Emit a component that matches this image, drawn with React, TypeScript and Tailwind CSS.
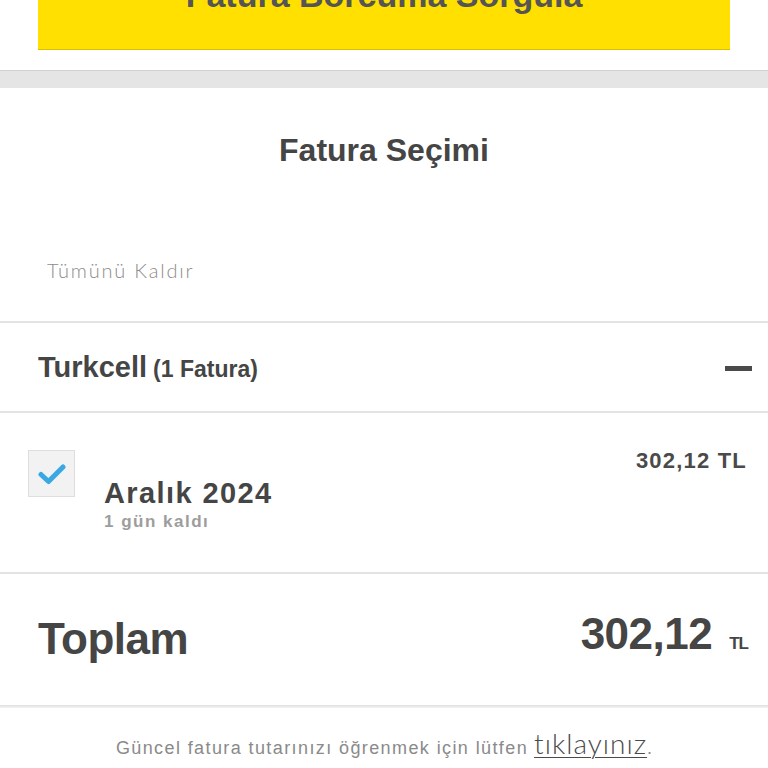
const sans = { fontFamily: '"Liberation Sans", Arial, sans-serif' }

const Divider = ({ h = 'h-[2px]' }: { h?: string }) => (
    <div className={`${h} w-full bg-[#e3e3e3]`} />
)

export default function App() {
    return (
        <div className="-mt-[30px] bg-white text-[#454545]" style={sans}>
            <div className="px-[38px]">
                <div className="h-[80px] bg-[#ffe000] border-b border-[#d9c200] pt-[8px] text-center text-[34px] leading-[34px] font-bold text-[#555]">
                    Fatura Borcuma Sorgula
                </div>
            </div>
            <div className="h-[20px]" />
            <div className="h-[18px] border-t border-[#d0d0d0] bg-[#e5e5e5]" />

            <div className="h-[233px] pt-[42px]">
                <h1 className="text-center text-[32px] leading-[40px] font-bold">Fatura Seçimi</h1>
                <p
                    className="mt-[86px] pl-[47px] text-[20px] leading-[28px] font-light text-[#8c8c8c] tracking-[1.8px]"
                    style={{ fontFamily: 'Lato, "Open Sans", sans-serif' }}
                >
                    Tümünü Kaldır
                </p>
            </div>
            <Divider />

            <div className="h-[88px] flex items-center justify-between pl-[38px] pr-[16px]">
                <div className="flex items-baseline font-bold">
                    <span className="text-[29px] leading-[34px]">Turkcell</span>
                    <span className="ml-[6px] text-[23px] leading-[28px]">(1 Fatura)</span>
                </div>
                <div className="w-[27px] h-[5px] bg-[#4a4a4a] mt-[2px]" />
            </div>
            <Divider />

            <div className="h-[159px] flex">
                <div className="ml-[28px] mt-[37px] w-[47px] h-[47px] bg-[#f2f2f2] border border-[#dedede] flex items-center justify-center">
                    <svg width="28" height="22" viewBox="0 0 28 22">
                        <path d="M3 11.5 L10.5 18.5 L25 4" fill="none" stroke="#3aa9e3" strokeWidth="5" strokeLinecap="round" strokeLinejoin="round" />
                    </svg>
                </div>
                <div className="flex-1 ml-[29px] pt-[35px] pr-[21px] font-bold">
                    <div className="h-[26px] flex justify-end text-[22px] leading-[26px] tracking-[1.2px] text-[#4a4a4a]">
                        302,12 TL
                    </div>
                    <div className="mt-[2px] text-[29px] leading-[34px] tracking-[1.4px]">Aralık 2024</div>
                    <div className="mt-[1px] text-[17px] leading-[22px] tracking-[1.5px] text-[#9d9d9d]">1 gün kaldı</div>
                </div>
            </div>
            <Divider />

            <div className="h-[131px] flex justify-between pl-[38px] pr-[20px] font-bold">
                <div className="mt-[40px] text-[44px] leading-[50px] tracking-[-0.5px]">Toplam</div>
                <div className="mt-[35px] flex items-baseline">
                    <span className="text-[44px] leading-[50px] tracking-[-0.5px]">302,12</span>
                    <span className="ml-[17px] text-[17px] leading-[20px] tracking-[-1px]">TL</span>
                </div>
            </div>
            <div className="h-[3px] w-full bg-gradient-to-b from-[#e0e0e0] to-[#f2f2f2]" />

            <div className="pt-[20px] flex justify-center items-baseline">
                <span className="text-[18px] leading-[24px] tracking-[1.4px] text-[#8a8a8a]">
                    Güncel fatura tutarınızı öğrenmek için lütfen
                </span>
                <span
                    className="ml-[6px] text-[28px] leading-[30px] font-light tracking-[1px] text-[#4a4a4a] underline underline-offset-[3px] decoration-1"
                    style={{ fontFamily: 'Lato, "Open Sans", sans-serif' }}
                >
                    tıklayınız
                </span>
                <span className="text-[18px] text-[#8a8a8a]">.</span>
            </div>
        </div>
    )
}
